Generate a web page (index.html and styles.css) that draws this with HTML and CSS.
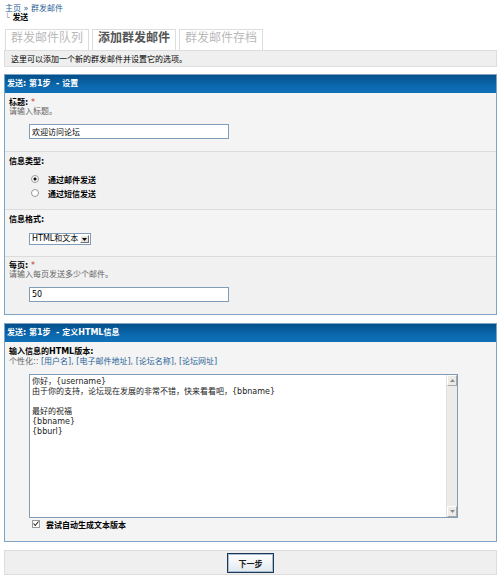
FILE: index.html
```html
<!DOCTYPE html>
<html lang="zh-CN">
<head>
<meta charset="utf-8">
<title>发送</title>
<link rel="stylesheet" href="styles.css">
</head>
<body>
<div class="page">
  <div class="crumbs">
    <div><a class="lnk" href="#">主页</a> <span class="sep">»</span> <a class="lnk" href="#">群发邮件</a></div>
    <div><span class="tree">└</span> <b>发送</b></div>
  </div>

  <ul class="tabs">
    <li class="tab">群发邮件队列</li>
    <li class="tab active">添加群发邮件</li>
    <li class="tab">群发邮件存档</li>
  </ul>
  <div class="desc-bar">这里可以添加一个新的群发邮件并设置它的选项。</div>

  <div class="panel">
    <div class="panel-head">发送: 第1步 &nbsp;- 设置</div>
    <div class="row alt1">
      <div class="label">标题: <span class="req">*</span></div>
      <div class="hint">请输入标题。</div>
      <input class="text" type="text" value="欢迎访问论坛">
    </div>
    <div class="row alt2 row-radios">
      <div class="label">信息类型:</div>
      <div class="radios">
        <label class="radio"><input type="radio" name="type" checked> 通过邮件发送</label>
        <label class="radio"><input type="radio" name="type"> 通过短信发送</label>
      </div>
    </div>
    <div class="row alt1 row-select">
      <div class="label">信息格式:</div>
      <div class="select">
        <select><option>HTML和文本</option></select>
        <span class="select-btn"><svg width="5" height="3" viewBox="0 0 5 3"><path d="M0 0h5L2.5 3z" fill="#000"/></svg></span>
      </div>
    </div>
    <div class="row alt2 row-last">
      <div class="label">每页: <span class="req">*</span></div>
      <div class="hint">请输入每页发送多少个邮件。</div>
      <input class="text" type="text" value="50">
    </div>
  </div>

  <div class="panel">
    <div class="panel-head">发送: 第1步 &nbsp;- 定义HTML信息</div>
    <div class="row alt1 row-msg">
      <div class="label">输入信息的HTML版本:</div>
      <div class="hint">个性化:: <a class="lnk" href="#">[用户名]</a>, <a class="lnk" href="#">[电子邮件地址]</a>, <a class="lnk" href="#">[论坛名称]</a>, <a class="lnk" href="#">[论坛网址]</a></div>
      <div class="ta-wrap">
        <textarea class="ta">你好，{username}
由于你的支持，论坛现在发展的非常不错，快来看看吧，{bbname}

最好的祝福
{bbname}
{bburl}</textarea>
        <div class="scrollbar">
          <span class="sb-btn"><svg width="5" height="3" viewBox="0 0 5 3"><path d="M0 3h5L2.5 0z" fill="#8a8a8a"/></svg></span>
          <span class="sb-track"></span>
          <span class="sb-btn"><svg width="5" height="3" viewBox="0 0 5 3"><path d="M0 0h5L2.5 3z" fill="#8a8a8a"/></svg></span>
        </div>
      </div>
      <label class="check-line"><span class="check"><svg width="6" height="6" viewBox="0 0 6 6"><path d="M0.5 2.5l1.8 2 3.2-4" fill="none" stroke="#222" stroke-width="1.1"/></svg></span><b>尝试自动生成文本版本</b></label>
    </div>
  </div>

  <div class="buttons">
    <button class="btn" type="button">下一步</button>
  </div>
</div>
</body>
</html>
```

FILE: styles.css
```css
* { box-sizing: border-box; }
html, body { margin: 0; padding: 0; background: #fff; }
body {
  font-family: "DejaVu Sans", "Noto Sans CJK SC", sans-serif;
  font-size: 8px;
  color: #000;
}
.page { padding: 4px 3px 0 4px; }

.crumbs { line-height: 9px; padding-left: 1px; }
.lnk { color: #1f5f97; text-decoration: none; }
.sep { color: #1f5f97; }
.tree { color: #999; }

.tabs {
  list-style: none;
  margin: 7px 0 0 1px;
  padding: 0;
  display: flex;
  gap: 3px;
}
.tab {
  height: 21px;
  border: 1px solid #ddd;
  border-bottom: none;
  background: #fff;
  color: #b9b9b9;
  font-size: 12px;
  line-height: 13px;
  padding: 2px 5px 0;
}
.tab.active { color: #555; font-weight: bold; }

.desc-bar {
  height: 17px;
  border: 1px solid #ddd;
  background: #efefef;
  padding: 2px 6px 0;
  line-height: 13px;
}

.panel {
  margin-top: 7px;
  border: 1px solid #7fa3c4;
}
.panel + .panel { margin-top: 8px; }
.panel-head {
  height: 18px;
  line-height: 18px;
  padding-left: 2px;
  color: #fff;
  font-weight: bold;
  background: linear-gradient(#03508a, #0b68ae 60%, #0f70b8);
}

.row {
  padding: 5px 4px 12px;
  border-bottom: 1px solid #dcdcdc;
}
.row:last-child { border-bottom: none; }
.alt1 { background: #f4f4f4; }
.alt2 { background: #f1f1f1; }
.row-radios { padding-bottom: 9px; }
.row-select { padding-bottom: 11px; }
.row-last { padding-top: 4px; }
.row-msg { padding-bottom: 12px; }

.label { font-weight: bold; line-height: 9px; }
.req { color: #c0392b; font-weight: normal; }
.hint { color: #666; line-height: 9px; }
.row-msg .label, .row-msg .hint { line-height: 10px; }

.text {
  display: block;
  margin: 8px 0 0 20px;
  width: 200px;
  height: 15px;
  border: 1px solid #7f9db9;
  padding: 0 2px;
  font: inherit;
  color: #000;
  background: #fff;
  outline: none;
}

.radios { margin: 6px 0 0 22px; }
.radio {
  display: flex;
  align-items: center;
  gap: 9px;
  height: 14px;
  font-weight: bold;
}
.radio input {
  appearance: none;
  margin: 0;
  width: 8px;
  height: 8px;
  border-radius: 50%;
  border: 1px solid #9a9a9a;
  background: #fff;
}
.radio input:checked {
  background: radial-gradient(circle, #111 0 1.3px, #fff 1.8px);
}

.select {
  display: flex;
  width: 62px;
  height: 12px;
  margin: 9px 0 0 20px;
  border: 1px solid #7f9db9;
  background: #fff;
}
.select select {
  appearance: none;
  flex: 1;
  min-width: 0;
  border: none;
  margin: 0;
  padding: 0 0 0 2px;
  font: inherit;
  line-height: 10px;
  background: #fff;
  color: #000;
  outline: none;
}
.select-btn {
  width: 9px;
  margin: 1px;
  display: flex;
  align-items: center;
  justify-content: center;
  background: #e4e2dc;
  border: 1px solid;
  border-color: #fff #6f6f6f #6f6f6f #fff;
}

.ta-wrap {
  display: flex;
  width: 429px;
  height: 144px;
  margin: 7px 0 0 20px;
  border: 1px solid #7f9db9;
  background: #fff;
}
.ta {
  flex: 1;
  border: none;
  margin: 0;
  padding: 2px 2px;
  resize: none;
  overflow: hidden;
  font: inherit;
  line-height: 10px;
  color: #222;
  background: #fff;
  outline: none;
}
.scrollbar {
  width: 11px;
  display: flex;
  flex-direction: column;
  background: #ecebe8;
  border-left: 1px solid #e2e0da;
}
.sb-btn {
  height: 11px;
  display: flex;
  align-items: center;
  justify-content: center;
  background: #ecebe6;
  border: 1px solid;
  border-color: #fff #a8a8a8 #a8a8a8 #fff;
}
.sb-track { flex: 1; }

.check-line {
  display: flex;
  align-items: center;
  gap: 6px;
  height: 10px;
  margin: 1px 0 0 23px;
}
.check {
  width: 8px;
  height: 8px;
  border: 1px solid #9a9a9a;
  background: #fff;
  display: flex;
  align-items: center;
  justify-content: center;
}

.buttons {
  margin-top: 8px;
  border: 1px solid #ddd;
  background: #efefef;
  padding: 2px 0 1px;
  display: flex;
  justify-content: center;
}
.btn {
  width: 47px;
  height: 20px;
  margin: 0;
  padding: 0;
  font: inherit;
  font-weight: bold;
  color: #1a1a1a;
  border: 1px solid #1b3a58;
  box-shadow: inset 0 0 0 1px #a9bdd1;
  background: linear-gradient(#ffffff, #e2e8ef);
}
```
